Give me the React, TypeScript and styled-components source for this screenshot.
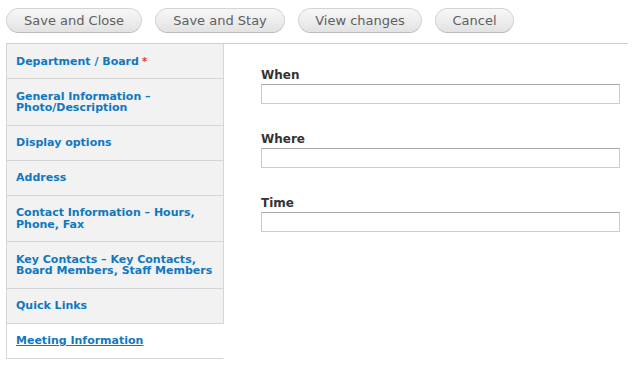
import React from 'react';
import styled, { createGlobalStyle } from 'styled-components';

const GlobalStyle = createGlobalStyle`
  html, body {
    margin: 0;
    padding: 0;
    background: #fff;
  }
  body {
    font-family: "DejaVu Sans", Verdana, sans-serif;
  }
`;

const Page = styled.div`
  padding: 8px 7px 0 6px;
  width: 622px;
`;

const Toolbar = styled.div`
  display: flex;
  gap: 13px;
  margin-bottom: 10px;
`;

const Button = styled.button<{ $width: number }>`
  width: ${p => p.$width}px;
  height: 25px;
  padding: 0;
  border: 1px solid #d4d4d4;
  border-bottom-color: #b9b9b9;
  border-radius: 13px;
  background: linear-gradient(to bottom, #f7f7f7 0%, #ececec 55%, #e2e2e2 100%);
  color: #5f5f5f;
  font-family: "DejaVu Sans", Verdana, sans-serif;
  font-size: 13px;
  line-height: 23px;
  cursor: pointer;
`;

const Tabs = styled.div`
  display: flex;
  border-top: 1px solid #cfcfcf;
`;

const Menu = styled.ul`
  list-style: none;
  margin: 0;
  padding: 0;
  width: 218px;
  flex-shrink: 0;
`;

const MenuItem = styled.li<{ $active?: boolean }>`
  background: ${p => (p.$active ? '#fff' : '#f2f2f2')};
  border-left: 1px solid #d6d6d6;
  border-right: 1px solid ${p => (p.$active ? '#fff' : '#d6d6d6')};
  border-bottom: 1px solid #d6d6d6;
  padding: 11.5px 8px 11px 9px;
`;

const TabLink = styled.a<{ $active?: boolean }>`
  display: block;
  color: #0f78c1;
  font-size: 11px;
  font-weight: bold;
  line-height: 11.5px;
  text-decoration: ${p => (p.$active ? 'underline' : 'none')};
  cursor: pointer;
`;

const Required = styled.span`
  color: #e83a3a;
  margin-left: 3px;
  font-size: 10px;
`;

const Pane = styled.div`
  flex: 1;
  padding: 24px 8px 0 37px;
  display: flex;
  flex-direction: column;
  gap: 28px;
`;

const Field = styled.div`
  display: flex;
  flex-direction: column;
`;

const Label = styled.label`
  color: #333;
  font-size: 12px;
  font-weight: bold;
  line-height: 14px;
  margin-bottom: 2px;
`;

const Input = styled.input`
  box-sizing: border-box;
  height: 20px;
  width: 100%;
  margin: 0;
  border: 1px solid #ccc;
  border-top-color: #a9a9a9;
  background: #fff;
`;

const tabs = [
  { label: 'Department / Board', required: true },
  { label: 'General Information – Photo/Description' },
  { label: 'Display options' },
  { label: 'Address' },
  { label: 'Contact Information – Hours, Phone, Fax' },
  { label: 'Key Contacts – Key Contacts, Board Members, Staff Members' },
  { label: 'Quick Links' },
  { label: 'Meeting Information', active: true },
];

const buttons = [
  { label: 'Save and Close', width: 136 },
  { label: 'Save and Stay', width: 130 },
  { label: 'View changes', width: 124 },
  { label: 'Cancel', width: 79 },
];

const App: React.FC = () => {
  return (
    <Page>
      <GlobalStyle />
      <Toolbar>
        {buttons.map(b => (
          <Button key={b.label} $width={b.width}>{b.label}</Button>
        ))}
      </Toolbar>
      <Tabs>
        <Menu>
          {tabs.map(t => (
            <MenuItem key={t.label} $active={t.active}>
              <TabLink $active={t.active}>
                {t.label}
                {t.required && <Required>*</Required>}
              </TabLink>
            </MenuItem>
          ))}
        </Menu>
        <Pane>
          {['When', 'Where', 'Time'].map(name => (
            <Field key={name}>
              <Label>{name}</Label>
              <Input type="text" />
            </Field>
          ))}
        </Pane>
      </Tabs>
    </Page>
  );
};

export default App;
